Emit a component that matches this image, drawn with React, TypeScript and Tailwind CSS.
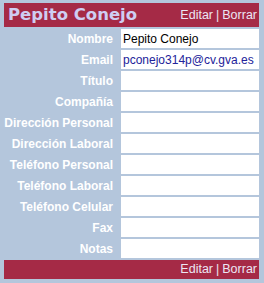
import React from 'react';

const fields: { label: string; value?: string; link?: boolean }[] = [
  { label: 'Nombre', value: 'Pepito Conejo' },
  { label: 'Email', value: 'pconejo314p@cv.gva.es', link: true },
  { label: 'Título' },
  { label: 'Compañía' },
  { label: 'Dirección Personal' },
  { label: 'Dirección Laboral' },
  { label: 'Teléfono Personal' },
  { label: 'Teléfono Laboral' },
  { label: 'Teléfono Celular' },
  { label: 'Fax' },
  { label: 'Notas' },
];

const Actions: React.FC = () => (
  <div className="text-[12.5px] text-[#ece6f4] leading-none">
    <span>Editar</span>
    <span className="mx-[3px]">|</span>
    <span>Borrar</span>
  </div>
);

const App: React.FC = () => {
  return (
    <div
      className="w-[264px] h-[283px] bg-[#b4c6dc] pt-[3px] pl-[4px] pr-[5px]"
      style={{ fontFamily: '"Liberation Sans", Arial, sans-serif' }}
    >
      {/* Header */}
      <div className="h-[24px] bg-[#a52a46] flex items-center justify-between pl-[4px] pr-[2px]">
        <span
          className="text-[16.5px] font-bold text-[#cfcdf2] leading-none"
          style={{ fontFamily: '"DejaVu Sans", Verdana, sans-serif' }}
        >
          Pepito Conejo
        </span>
        <Actions />
      </div>

      {/* Fields */}
      <div className="grid grid-cols-[114px_138px] gap-x-[3px] gap-y-[2px] mt-[2px]">
        {fields.map((f) => (
          <React.Fragment key={f.label}>
            <div className="h-[19px] flex items-center justify-end pr-[5px] text-[12px] font-bold text-white whitespace-nowrap">
              {f.label}
            </div>
            <div
              className={`h-[19px] bg-white flex items-center pl-[2px] text-[12px] whitespace-nowrap ${
                f.link ? 'text-[#22229a]' : 'text-black'
              }`}
            >
              {f.value}
            </div>
          </React.Fragment>
        ))}
      </div>

      {/* Footer */}
      <div className="h-[19px] bg-[#a52a46] flex items-center justify-end pr-[2px] mt-[2px]">
        <Actions />
      </div>
    </div>
  );
};

export default App;
